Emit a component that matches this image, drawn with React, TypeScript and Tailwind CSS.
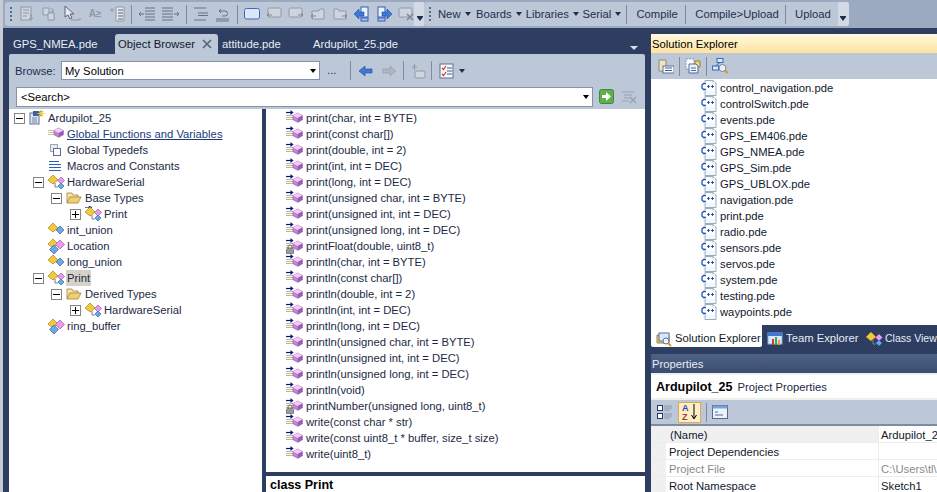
import type { ReactNode } from "react";

const treeIndent: Record<number, string> = {
  0: "pl-[5px]",
  1: "pl-[24px]",
  2: "pl-[42px]",
  3: "pl-[61px]",
};

const Cube = ({ x = 0, y = 0, s = 0.85 }: { x?: number; y?: number; s?: number }) => (
  <g transform={`translate(${x} ${y}) scale(${s})`}>
    <path d="M5.5 0 11 3 11 8 5.5 11 0 8 0 3Z" fill="#c583d6" stroke="#8a5aa5" strokeWidth=".7" />
    <path d="M5.5 0 11 3 5.5 6 0 3Z" fill="#f3cdf8" />
    <path d="M5.5 6 11 3 11 8 5.5 11Z" fill="#9a5cb4" />
  </g>
);

function MethodIcon({ locked }: { locked?: boolean }) {
  return (
    <svg width="21" height="16" viewBox="0 0 21 16" className="shrink-0">
      <path d="M1 5.500h7M1 7.500h7M1 9.500h7" stroke="#b9b98c" strokeWidth="1" />
      <path d="M1 2.500h6" stroke="#10108c" strokeWidth="1.200" />
      <path d="M5.500 0 8.500 2.500 5.500 5Z" fill="#10108c" />
      <Cube x={8} y={3} />
      {locked && (
        <g>
          <rect x="1.500" y="10.500" width="7" height="5.500" rx="1" fill="#9a9a9a" stroke="#555" strokeWidth=".6" />
          <path d="M3 10.500V9a2 2 0 0 1 4 0v1.500" fill="none" stroke="#666" strokeWidth=".9" />
        </g>
      )}
    </svg>
  );
}

function GlobalIcon() {
  return (
    <svg width="16" height="16" viewBox="0 0 16 16" className="shrink-0">
      <path d="M0 4.500h6M0 6.500h6M0 8.500h6" stroke="#c4c4a0" strokeWidth="1" />
      <Cube x={6} y={2} />
    </svg>
  );
}

function TypedefIcon() {
  return (
    <svg width="16" height="16" viewBox="0 0 16 16" className="shrink-0">
      <rect x="2.500" y="2.500" width="7" height="7" fill="#e8ecf2" stroke="#9aa5b8" />
      <rect x="5.500" y="6.500" width="7" height="7" fill="#fff" stroke="#5c6f90" />
    </svg>
  );
}

function MacroIcon() {
  return (
    <svg width="16" height="16" viewBox="0 0 16 16" className="shrink-0">
      <path d="M1 3.500h10M1 6.500h12M1 9.500h12M1 12.500h12" stroke="#2e5fb0" strokeWidth="1.200" />
    </svg>
  );
}

function ClassIcon({ kind = "class", arrow }: { kind?: "class" | "union" | "struct"; arrow?: boolean }) {
  return (
    <svg width="18" height="16" viewBox="0 0 18 16" className="shrink-0">
      {arrow && <path d="M0 1.500h6M4 0l3 1.500L4 3Z" fill="#10108c" stroke="#10108c" strokeWidth=".6" />}
      <path d="M5 1 10 6 5 10 0 6Z" fill="#f2c93e" stroke="#a5811a" strokeWidth=".7" />
      {kind === "class" && (
        <>
          <path d="M7 9V13H10" fill="none" stroke="#6c7f9c" />
          <path d="M13 3 16.500 6.500 13 10 9.500 6.500Z" fill="#e79be8" stroke="#a050a8" strokeWidth=".7" />
          <path d="M13 9 16 12 13 15 10 12Z" fill="#6aa8e6" stroke="#2e6aa8" strokeWidth=".7" />
        </>
      )}
      {kind === "union" && <path d="M12 4 16 8 12 12 8 8Z" fill="#6aa8e6" stroke="#2e6aa8" strokeWidth=".7" />}
      {kind === "struct" && (
        <>
          <path d="M12 2 16.500 6.500 12 11 7.500 6.500Z" fill="#e79be8" stroke="#a050a8" strokeWidth=".7" />
          <path d="M6 7 10.500 11.500 6 16 1.500 11.500Z" fill="#6aa8e6" stroke="#2e6aa8" strokeWidth=".7" />
        </>
      )}
    </svg>
  );
}

function FolderIcon() {
  return (
    <svg width="16" height="14" viewBox="0 0 16 14" className="shrink-0">
      <path d="M1 12V2h5l1 2h5v2" fill="#f7e3a0" stroke="#9a8340" strokeWidth=".8" />
      <path d="M1 12 4 6h11l-3 6Z" fill="#f4cf6e" stroke="#9a8340" strokeWidth=".8" />
    </svg>
  );
}

function SolutionIcon() {
  return (
    <svg width="16" height="16" viewBox="0 0 16 16" className="shrink-0">
      <rect x="1" y="3" width="9" height="11" fill="#dfe6f2" stroke="#5a6f98" />
      <rect x="4" y="1" width="9" height="5" fill="#3f5f9c" />
      <path d="M3 8h5M3 10h5M3 12h5" stroke="#6c82ad" />
      <path d="M12 0v7M8.500 3.500h7M10 1l4 5M14 1l-4 5" stroke="#f2c93e" strokeWidth="1.100" />
    </svg>
  );
}

function Expander({ open }: { open?: boolean }) {
  return (
    <span className="relative block h-[11px] w-[11px] shrink-0 border border-[#848484] bg-white">
      <span className="absolute left-[1px] top-[4px] h-px w-[7px] bg-black" />
      {!open && <span className="absolute left-[4px] top-[1px] h-[7px] w-px bg-black" />}
    </span>
  );
}

function CppIcon() {
  return (
    <svg width="16" height="16" viewBox="0 0 16 16" className="shrink-0">
      <path d="M4 .5h8l3 3v12H4Z" fill="#f4f7fb" stroke="#9cabc2" />
      <path d="M12 .5v3h3" fill="#dbe3ef" stroke="#9cabc2" />
      <rect x="0" y="2" width="14" height="9" fill="#fff" opacity=".85" />
      <path d="M5 3.500H2.500L1 5v3l1.500 1.500H5" fill="none" stroke="#1e55b4" strokeWidth="1.300" />
      <path d="M6 6.500h3M7.500 5v3M10 6.500h3M11.500 5v3" stroke="#1e55b4" />
    </svg>
  );
}

function TreeRow({
  depth,
  open,
  icon,
  label,
  className,
}: {
  depth: number;
  open?: boolean | "none";
  icon: ReactNode;
  label: string;
  className?: string;
}) {
  return (
    <div className={`flex h-4 items-center ${treeIndent[depth]}`}>
      {open === "none" ? <span className="w-[11px] shrink-0" /> : <Expander open={open} />}
      <span className="ml-[4px] flex w-[18px] shrink-0 items-center">{icon}</span>
      <span className={`whitespace-nowrap px-[1px] leading-4 ${className ?? ""}`}>{label}</span>
    </div>
  );
}

const members = [
  "print(char, int = BYTE)",
  "print(const char[])",
  "print(double, int = 2)",
  "print(int, int = DEC)",
  "print(long, int = DEC)",
  "print(unsigned char, int = BYTE)",
  "print(unsigned int, int = DEC)",
  "print(unsigned long, int = DEC)",
  "printFloat(double, uint8_t)",
  "println(char, int = BYTE)",
  "println(const char[])",
  "println(double, int = 2)",
  "println(int, int = DEC)",
  "println(long, int = DEC)",
  "println(unsigned char, int = BYTE)",
  "println(unsigned int, int = DEC)",
  "println(unsigned long, int = DEC)",
  "println(void)",
  "printNumber(unsigned long, uint8_t)",
  "write(const char * str)",
  "write(const uint8_t * buffer, size_t size)",
  "write(uint8_t)",
];

const files = [
  "control_navigation.pde",
  "controlSwitch.pde",
  "events.pde",
  "GPS_EM406.pde",
  "GPS_NMEA.pde",
  "GPS_Sim.pde",
  "GPS_UBLOX.pde",
  "navigation.pde",
  "print.pde",
  "radio.pde",
  "sensors.pde",
  "servos.pde",
  "system.pde",
  "testing.pde",
  "waypoints.pde",
];

const Sep = ({ className }: { className?: string }) => (
  <span className={`h-[19px] w-px shrink-0 bg-[#7f8ba0] ${className ?? ""}`} />
);

const Grip = () => (
  <span className="flex h-[16px] w-[3px] shrink-0 flex-col justify-between py-[1px]">
    <span className="h-[2px] w-[2px] bg-[#5c6a82]" />
    <span className="h-[2px] w-[2px] bg-[#5c6a82]" />
    <span className="h-[2px] w-[2px] bg-[#5c6a82]" />
    <span className="h-[2px] w-[2px] bg-[#5c6a82]" />
  </span>
);

const Caret = ({ color = "border-t-[#1f2f4a]" }: { color?: string }) => (
  <span className={`ml-[4px] inline-block h-0 w-0 border-x-[3.5px] border-t-[4px] border-x-transparent ${color}`} />
);

const Overflow = () => (
  <span className="flex w-[11px] shrink-0 flex-col items-center justify-end self-stretch rounded-r-[3px] bg-[#d3dae6] pb-[5px]">
    <span className="h-px w-[6px] bg-[#1f2f4a]" />
    <span className="h-0 w-0 border-x-[3.5px] border-t-[4px] border-x-transparent border-t-[#1f2f4a]" />
  </span>
);

function GrayIcon({ children, w = 16 }: { children: ReactNode; w?: number }) {
  return (
    <svg width={w} height="16" viewBox={`0 0 ${w} 16`} className="shrink-0" fill="none" stroke="#8f98a8" strokeWidth="1">
      {children}
    </svg>
  );
}

const Bubble = ({ flip }: { flip?: boolean }) => (
  <GrayIcon>
    <g transform={flip ? "translate(16 0) scale(-1 1)" : undefined}>
      <rect x="1" y="2" width="13" height="9" rx="1.500" fill="#cfd5df" />
      <path d="M10 9h5M13 7l2 2-2 2" stroke="#7c8698" />
    </g>
  </GrayIcon>
);

const FileDir = ({ flip }: { flip?: boolean }) => (
  <GrayIcon>
    <g transform={flip ? "translate(16 0) scale(-1 1)" : undefined}>
      <path d="M2 3h4l1 2h7v8H2Z" fill="#cfd5df" />
      <path d="M10 10h5M13 8l2 2-2 2" stroke="#7c8698" />
    </g>
  </GrayIcon>
);

function EditToolbar() {
  return (
    <div className="flex h-[24px] w-[418px] shrink-0 items-center rounded-[3px] bg-[#bcc7d8] pl-[5px]">
      <Grip />
      <div className="ml-[6px] flex items-center gap-[6px]">
        <GrayIcon>
          <rect x="2" y="1" width="10" height="13" fill="#cfd5df" />
          <path d="M4 4h6M4 7h6M4 10h4M12 8v6M10 12l2 2 2-2" />
        </GrayIcon>
        <GrayIcon>
          <path d="M2 2h6v7H2Z" fill="#cfd5df" />
          <path d="M7 7h6v7H7Z" fill="#cfd5df" />
          <path d="M10 2l3 3-3 1" />
        </GrayIcon>
        <GrayIcon w={18}>
          <path d="M2 0v11l3-2 2 4 2-1-2-4h4Z" fill="#e6e9ef" stroke="#5a6478" />
          <path d="M8 14h9v-2" />
        </GrayIcon>
        <span className="w-[16px] text-center text-[10px] font-bold leading-4 text-[#8f98a8]">A≥</span>
        <GrayIcon>
          <path d="M1 4h4M3 2v4" />
          <path d="M7 1h8v14H7Z" fill="#e6e9ef" />
          <path d="M9 4h5M9 7h5M9 10h5M9 13h5" stroke="#5a6478" />
        </GrayIcon>
        <Sep />
        <GrayIcon w={18}>
          <path d="M7 2h10M7 5h10M7 8h10M7 11h10M7 14h10M1 8h5M3 6 1 8l2 2" stroke="#66718a" />
        </GrayIcon>
        <GrayIcon w={18}>
          <path d="M0 2h11M0 5h11M0 8h11M0 11h11M0 14h11M12 8h5M15 6l2 2-2 2" stroke="#66718a" />
        </GrayIcon>
        <Sep />
        <GrayIcon>
          <path d="M1 2h12M5 7h10M5 9.500h10M1 14h12" stroke="#66718a" />
        </GrayIcon>
        <GrayIcon>
          <path d="M1 13h13M1 15h13" stroke="#66718a" />
          <path d="M6 3 4 5l2 2M4 5h6a2 2 0 0 1 0 5H7" stroke="#66718a" />
        </GrayIcon>
        <Sep />
        <svg width="16" height="16" viewBox="0 0 16 16" className="shrink-0">
          <rect x=".5" y="2.500" width="15" height="10.500" rx="2" fill="#dbe7fb" stroke="#3f68b8" />
        </svg>
        <Bubble flip />
        <Bubble />
        <FileDir flip />
        <FileDir />
        <svg width="16" height="16" viewBox="0 0 16 16" className="shrink-0">
          <rect x="7" y="1" width="7" height="10" fill="#eef2fa" stroke="#2f5fb8" />
          <path d="M0 8 5 3v3h5v4H5v3Z" fill="#3f78d8" stroke="#1f4a9c" strokeWidth=".6" />
          <rect x="7" y="12" width="7" height="3" fill="#a8c4ee" stroke="#2f5fb8" />
        </svg>
        <svg width="16" height="16" viewBox="0 0 16 16" className="shrink-0">
          <rect x="2" y="1" width="7" height="10" fill="#eef2fa" stroke="#2f5fb8" />
          <path d="M16 8 11 3v3H6v4h5v3Z" fill="#3f78d8" stroke="#1f4a9c" strokeWidth=".6" />
          <rect x="2" y="12" width="7" height="3" fill="#a8c4ee" stroke="#2f5fb8" />
        </svg>
        <GrayIcon>
          <rect x="1" y="2" width="13" height="9" rx="1.500" fill="#cfd5df" />
          <path d="M9 8l6 6M15 8l-6 6" stroke="#7c8698" strokeWidth="1.500" />
        </GrayIcon>
      </div>
      <span className="flex-1" />
      <Overflow />
    </div>
  );
}

function ArduinoToolbar() {
  return (
    <div className="ml-[1px] flex h-[24px] w-[425px] shrink-0 items-center rounded-[3px] bg-[#bcc7d8] pl-[5px] text-[#1f2f4a]">
      <Grip />
      <span className="ml-[6px] flex w-[38px] items-center">New<Caret /></span>
      <span className="flex w-[50px] items-center">Boards<Caret /></span>
      <span className="flex w-[57px] items-center">Libraries<Caret /></span>
      <span className="flex w-[44px] items-center">Serial<Caret /></span>
      <Sep />
      <span className="w-[58px] pl-[9px]">Compile</span>
      <Sep />
      <span className="w-[99px] pl-[9px]">Compile&gt;Upload</span>
      <Sep />
      <span className="w-[52px] pl-[9px]">Upload</span>
      <Overflow />
    </div>
  );
}

function ObjectBrowserBar() {
  return (
    <div className="h-[55px] shrink-0 rounded-t-[2px] bg-[#bcc7d8] px-[6px] pt-[7px]">
      <div className="flex h-[19px] items-center text-[#1f2f4a]">
        <span className="w-[46px] pt-px">Browse:</span>
        <div className="flex h-[19px] w-[259px] items-center border border-[#8593aa] bg-white px-[3px] text-black">
          <span className="flex-1 pt-px">My Solution</span>
          <Caret color="border-t-black" />
        </div>
        <span className="ml-[7px] w-[20px] text-[#1f2f4a]">...</span>
        <Sep className="ml-[3px]" />
        <svg width="16" height="12" viewBox="0 0 16 12" className="ml-[7px] shrink-0">
          <path d="M1 6 7 1v3h7v4H7v3Z" fill="#3f78d8" stroke="#1f4a9c" strokeWidth=".6" />
        </svg>
        <svg width="16" height="12" viewBox="0 0 16 12" className="ml-[7px] shrink-0">
          <path d="M15 6 9 1v3H2v4h7v3Z" fill="#aeb6c2" stroke="#8f98a8" strokeWidth=".6" />
        </svg>
        <Sep className="ml-[6px]" />
        <svg width="16" height="16" viewBox="0 0 16 16" className="ml-[6px] shrink-0" fill="none" stroke="#8f98a8">
          <path d="M2 4h5M4.500 1v6" />
          <rect x="5" y="8" width="10" height="7" rx="1" fill="#cfd5df" />
        </svg>
        <Sep className="ml-[5px]" />
        <svg width="16" height="16" viewBox="0 0 16 16" className="ml-[7px] shrink-0">
          <rect x="1" y="1" width="13" height="14" fill="#f6f8fb" stroke="#5d7096" />
          <path d="M3 5l1.500 1.500L7 3" fill="none" stroke="#d23a2a" strokeWidth="1.200" />
          <path d="M3 11l1.500 1.500L7 9" fill="none" stroke="#d23a2a" strokeWidth="1.200" />
          <path d="M8 5h5M8 8h5M8 11h5" stroke="#3a5a98" />
        </svg>
        <Caret />
      </div>
      <div className="mt-[7px] flex h-[20px] items-center pl-[1px]">
        <div className="flex h-[20px] w-[578px] items-center border border-[#8593aa] bg-white pl-[4px] pr-[3px] text-black">
          <span className="flex-1 pt-px">&lt;Search&gt;</span>
          <Caret color="border-t-black" />
        </div>
        <svg width="16" height="16" viewBox="0 0 16 16" className="ml-[6px] shrink-0">
          <rect x=".5" y=".5" width="14" height="14" rx="2" fill="#5fb04c" stroke="#3f8a34" />
          <path d="M3 6h4V3l5 4.500L7 12V9H3Z" fill="#fff" />
        </svg>
        <svg width="18" height="16" viewBox="0 0 18 16" className="ml-[6px] shrink-0" fill="none" stroke="#9aa2b0">
          <path d="M1 3h12M3 6h8M3 9h6M1 12h7" />
          <path d="M9 8l6 6M15 8l-6 6" strokeWidth="1.600" />
        </svg>
      </div>
    </div>
  );
}

function ObjectTree() {
  return (
    <div className="w-[253px] shrink-0 bg-white pt-px text-[#1c2a44]">
      <TreeRow depth={0} open icon={<SolutionIcon />} label="Ardupilot_25" />
      <TreeRow depth={1} open="none" icon={<GlobalIcon />} label="Global Functions and Variables" className="text-[#1b3a78] underline" />
      <TreeRow depth={1} open="none" icon={<TypedefIcon />} label="Global Typedefs" />
      <TreeRow depth={1} open="none" icon={<MacroIcon />} label="Macros and Constants" />
      <TreeRow depth={1} open icon={<ClassIcon />} label="HardwareSerial" />
      <TreeRow depth={2} open icon={<FolderIcon />} label="Base Types" />
      <TreeRow depth={3} icon={<ClassIcon arrow />} label="Print" />
      <TreeRow depth={1} open="none" icon={<ClassIcon kind="union" />} label="int_union" />
      <TreeRow depth={1} open="none" icon={<ClassIcon kind="struct" />} label="Location" />
      <TreeRow depth={1} open="none" icon={<ClassIcon kind="union" />} label="long_union" />
      <TreeRow depth={1} open icon={<ClassIcon />} label="Print" className="bg-[#d6d2ca]" />
      <TreeRow depth={2} open icon={<FolderIcon />} label="Derived Types" />
      <TreeRow depth={3} icon={<ClassIcon />} label="HardwareSerial" />
      <TreeRow depth={1} open="none" icon={<ClassIcon kind="struct" />} label="ring_buffer" />
    </div>
  );
}

function MemberList() {
  return (
    <div className="flex min-h-0 flex-1 flex-col">
      <div className="min-h-0 flex-1 bg-white pl-[19px] pt-px text-[#1c2a44]">
        {members.map((m) => (
          <div key={m} className="flex h-4 items-center">
            <MethodIcon locked={m.startsWith("printFloat") || m.startsWith("printNumber")} />
            <span className="whitespace-nowrap leading-4">{m}</span>
          </div>
        ))}
      </div>
      <div className="mt-[4px] h-[16px] shrink-0 bg-white pl-[4px] text-[12.500px] font-bold leading-[18px] text-black">
        class Print
      </div>
    </div>
  );
}

function DocumentArea() {
  return (
    <div className="flex w-[636px] shrink-0 flex-col">
      <div className="flex h-[26px] shrink-0 items-end justify-between">
        <div className="flex h-[20px] items-center">
          <span className="w-[106px] pl-[4px] text-[#e8edf5]">GPS_NMEA.pde</span>
          <div className="flex h-[20px] w-[103px] items-center justify-between rounded-t-[3px] bg-[#bcc7d8] pl-[3px] pr-[5px] text-[#10192c]">
            <span className="whitespace-nowrap">Object Browser</span>
            <svg width="12" height="12" viewBox="0 0 12 12" className="shrink-0">
              <path d="M2 2l8 8M10 2l-8 8" stroke="#55627a" strokeWidth="1.600" />
            </svg>
          </div>
          <span className="ml-[4px] w-[91px] text-[#e8edf5]">attitude.pde</span>
          <span className="text-[#e8edf5]">Ardupilot_25.pde</span>
        </div>
        <span className="mb-[4px] mr-[7px] h-0 w-0 border-x-[4px] border-t-[4px] border-x-transparent border-t-[#d7dde8]" />
      </div>
      <ObjectBrowserBar />
      <div className="flex min-h-0 flex-1">
        <ObjectTree />
        <span className="w-[4px] shrink-0" />
        <MemberList />
      </div>
    </div>
  );
}

function SolutionExplorer() {
  return (
    <div className="flex shrink-0 flex-col">
      <div className="mt-[6px] h-[19px] shrink-0 bg-gradient-to-b from-[#fff8df] to-[#ffe39c] pl-[1px] leading-[21px] text-black">
        Solution Explorer
      </div>
      <div className="flex h-[26px] shrink-0 items-center gap-[5px] bg-[#bcc7d8] pl-[7px]">
        <svg width="16" height="16" viewBox="0 0 16 16" className="shrink-0">
          <path d="M1 2h7v11H1Z" fill="#efe3c0" stroke="#8b8b7a" />
          <rect x="5" y="8" width="11" height="7" fill="#fff" stroke="#5d7096" />
          <path d="M7 10h7M7 12.500h7" stroke="#3a5a98" />
        </svg>
        <Sep />
        <svg width="16" height="16" viewBox="0 0 16 16" className="shrink-0">
          <path d="M1 1h8v10H1Z" fill="#fff" stroke="#8b97ab" strokeDasharray="2 1" />
          <path d="M10 3h5v6h-5Z" fill="#f2d272" stroke="#9a8340" />
          <path d="M4 6h7l2 2v7H4Z" fill="#eef2fa" stroke="#4f6b9c" />
          <path d="M6 10h5M6 12.500h5" stroke="#4f6b9c" />
        </svg>
        <Sep />
        <svg width="16" height="16" viewBox="0 0 16 16" className="shrink-0">
          <rect x="5" y="0.500" width="6" height="4" fill="#dbe7fb" stroke="#3f68b8" />
          <rect x="0.500" y="8" width="6" height="4" fill="#dbe7fb" stroke="#3f68b8" />
          <path d="M8 4.500 3.500 8" stroke="#3f68b8" />
          <circle cx="10.500" cy="10" r="3.500" fill="#e8eef6" stroke="#7c8698" />
          <path d="M13 12.500l2.500 2.500" stroke="#d8922a" strokeWidth="2" />
        </svg>
      </div>
      <div className="h-[246px] shrink-0 bg-white pl-[50px] pt-px text-[#10192c]">
        {files.map((f) => (
          <div key={f} className="flex h-4 items-center gap-[3px]">
            <CppIcon />
            <span className="leading-4">{f}</span>
          </div>
        ))}
      </div>
      <div className="flex h-[23px] shrink-0 items-start whitespace-nowrap">
        <div className="flex h-[22px] w-[111px] shrink-0 items-center gap-[3px] rounded-b-[2px] bg-white pl-[5px] pt-[5px] text-[#10192c]">
          <svg width="16" height="16" viewBox="0 0 16 16" className="shrink-0">
            <path d="M1 4h12v8H1Z" fill="#f2d272" stroke="#9a8340" />
            <rect x="3" y="2" width="10" height="8" fill="#dbe7fb" stroke="#5d7096" />
            <circle cx="10" cy="10" r="3" fill="#eef2fa" stroke="#5d7096" />
            <path d="M12 12l3 3" stroke="#d8922a" strokeWidth="1.800" />
          </svg>
          <span>Solution Explorer</span>
        </div>
        <div className="flex h-[22px] w-[99px] shrink-0 items-center gap-[3px] pl-[5px] pt-[5px] text-[#e8edf5]">
          <svg width="16" height="16" viewBox="0 0 16 16" className="shrink-0">
            <rect x="1" y="2" width="14" height="11" fill="#dbe7fb" stroke="#8fb0dc" />
            <rect x="1" y="2" width="14" height="3" fill="#3f78d8" />
            <path d="M6 14V8" stroke="#d23a2a" strokeWidth="2" />
            <path d="M9 14V6" stroke="#3fa84a" strokeWidth="2" />
            <path d="M12 14V9" stroke="#e8a23a" strokeWidth="2" />
          </svg>
          <span>Team Explorer</span>
        </div>
        <div className="flex h-[22px] shrink-0 items-center gap-px pl-[5px] pt-[5px] text-[#e8edf5]">
          <ClassIcon />
          <span className="text-[10.500px]">Class View</span>
        </div>
      </div>
    </div>
  );
}

function PropertiesPanel() {
  const rows = [
    { name: "(Name)", value: "Ardupilot_2", selected: true },
    { name: "Project Dependencies", value: "" },
    { name: "Project File", value: "C:\\Users\\tl\\", muted: true },
    { name: "Root Namespace", value: "Sketch1" },
  ];
  return (
    <div className="mt-[6px] flex min-h-0 flex-1 flex-col">
      <div className="h-[19px] shrink-0 bg-gradient-to-b from-[#4d6286] to-[#3a4d70] pl-[1px] leading-[21px] text-[#e8edf5]">
        Properties
      </div>
      <div className="flex h-[27px] shrink-0 items-center gap-[5px] border-y-2 border-[#eef0ea] bg-white pl-[5px] pt-px text-black">
        <span className="text-[12.500px] font-bold">Ardupilot_25</span>
        <span className="text-[#1c2a44]">Project Properties</span>
      </div>
      <div className="flex h-[26px] shrink-0 items-center gap-[5px] border-b-2 border-[#7f8ba0] bg-[#bcc7d8] pl-[6px]">
        <svg width="16" height="16" viewBox="0 0 16 16" className="shrink-0">
          <rect x=".5" y="1.500" width="5" height="5" fill="#fff" stroke="#1f3a78" />
          <rect x=".5" y="9.500" width="5" height="5" fill="#fff" stroke="#1f3a78" />
          <path d="M7 2h8M7 4h8M7 6h6M7 10h8M7 12h8M7 14h6" stroke="#8f98a8" />
        </svg>
        <span className="flex h-[21px] w-[23px] items-center justify-center border border-[#e0a94a] bg-[#fdeec8]">
          <svg width="16" height="18" viewBox="0 0 16 18">
            <text x="0" y="8" fontSize="9" fontWeight="700" fill="#2a4aa8" fontFamily="'Liberation Sans', sans-serif">A</text>
            <text x="0" y="17" fontSize="9" fontWeight="700" fill="#a83a2a" fontFamily="'Liberation Sans', sans-serif">Z</text>
            <path d="M12 1v14M9.500 12l2.500 4 2.500-4" fill="none" stroke="#000" />
          </svg>
        </span>
        <Sep />
        <svg width="16" height="14" viewBox="0 0 16 14" className="shrink-0">
          <rect x=".5" y=".5" width="15" height="13" fill="#eef2fa" stroke="#4f6b9c" />
          <rect x=".5" y=".5" width="15" height="3" fill="#7fa0d4" />
          <path d="M3 7h3M3 10h8" stroke="#4f6b9c" />
        </svg>
      </div>
      <div className="min-h-0 flex-1 overflow-hidden bg-white">
        {rows.map((r) => (
          <div key={r.name} className={`flex h-[17px] items-center border-b border-[#ececec] ${r.muted ? "text-[#8a8a8a]" : "text-[#10192c]"}`}>
            <span className="h-full w-[15px] shrink-0 bg-[#f0f0f0]" />
            <span className={`h-full w-[212px] shrink-0 pl-[3px] leading-[18px] ${r.selected ? "bg-[#f0f0f0]" : ""}`}>
              <span className={r.selected ? "pl-[1px]" : ""}>{r.name}</span>
            </span>
            <span className="h-full flex-1 whitespace-nowrap border-l border-[#ececec] pl-[2px] leading-[18px]">{r.value}</span>
          </div>
        ))}
      </div>
    </div>
  );
}

export default function App() {
  return (
    <div className="flex h-[492px] w-[937px] flex-col overflow-hidden bg-[#2a3a57] font-['Liberation_Sans',sans-serif] text-[11.250px]">
      <div className="flex h-[28px] shrink-0 items-center border-l-[3px] border-[#c6cbd4] bg-[#9caac1] pl-[2px]">
        <EditToolbar />
        <ArduinoToolbar />
      </div>
      <div className="flex min-h-0 flex-1 border-l-[3px] border-[#c6cbd4] bg-[repeating-conic-gradient(#293957_0_25%,#31436a_0_50%)] bg-[length:2px_2px] pl-[6px]">
        <DocumentArea />
        <span className="w-[6px] shrink-0" />
        <div className="flex w-[286px] shrink-0 flex-col">
          <SolutionExplorer />
          <PropertiesPanel />
        </div>
      </div>
    </div>
  );
}
